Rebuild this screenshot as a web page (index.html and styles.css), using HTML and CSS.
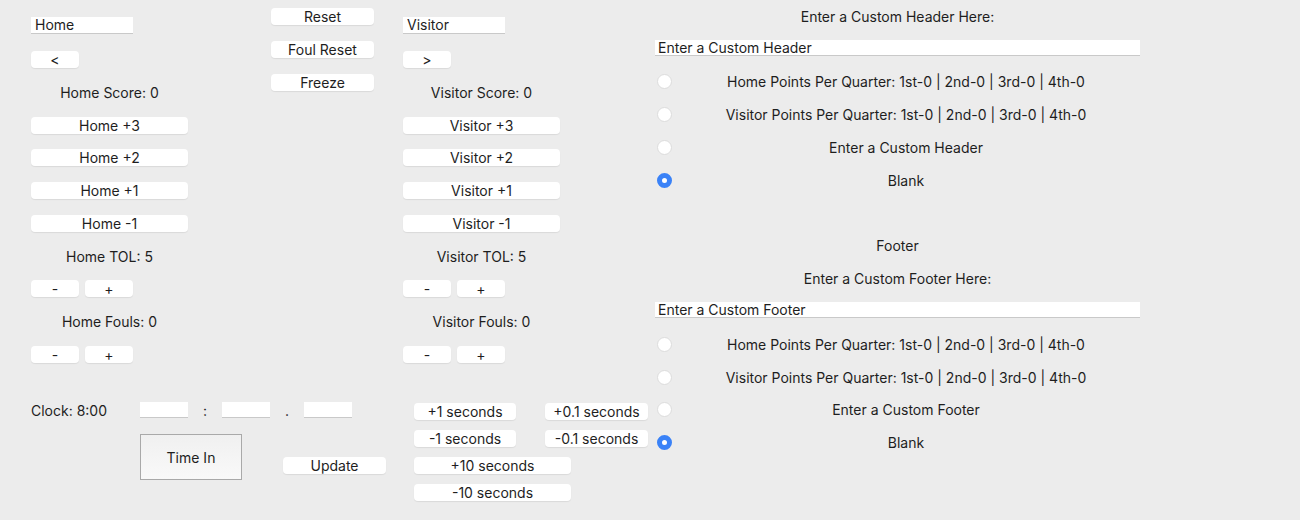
FILE: index.html
```html
<!DOCTYPE html>
<html lang="en">
<head>
<meta charset="UTF-8">
<meta name="viewport" content="width=device-width, initial-scale=1.0">
<title>Scoreboard Controller</title>
<link rel="stylesheet" href="styles.css">
</head>
<body>

<div class="app">
<div class="left">

<!-- Team and game controls -->
<div class="teams">
<div class="team">
<div class="row"><input type="text" class="field name-field" value="Home"></div>
<div class="row"><button class="btn small">&lt;</button></div>
<div class="row label">Home Score: 0</div>
<div class="row"><button class="btn wide">Home +3</button></div>
<div class="row"><button class="btn wide">Home +2</button></div>
<div class="row"><button class="btn wide">Home +1</button></div>
<div class="row"><button class="btn wide">Home -1</button></div>
<div class="row label">Home TOL: 5</div>
<div class="row pair"><button class="btn small">-</button><button class="btn small">+</button></div>
<div class="row label">Home Fouls: 0</div>
<div class="row pair"><button class="btn small">-</button><button class="btn small">+</button></div>
</div>

<div class="controls">
<div class="row"><button class="btn mid">Reset</button></div>
<div class="row"><button class="btn mid">Foul Reset</button></div>
<div class="row"><button class="btn mid">Freeze</button></div>
</div>

<div class="team">
<div class="row"><input type="text" class="field name-field" value="Visitor"></div>
<div class="row"><button class="btn small">&gt;</button></div>
<div class="row label">Visitor Score: 0</div>
<div class="row"><button class="btn wide">Visitor +3</button></div>
<div class="row"><button class="btn wide">Visitor +2</button></div>
<div class="row"><button class="btn wide">Visitor +1</button></div>
<div class="row"><button class="btn wide">Visitor -1</button></div>
<div class="row label">Visitor TOL: 5</div>
<div class="row pair"><button class="btn small">-</button><button class="btn small">+</button></div>
<div class="row label">Visitor Fouls: 0</div>
<div class="row pair"><button class="btn small">-</button><button class="btn small">+</button></div>
</div>
</div>

<!-- Clock -->
<div class="clock">
<div class="clock-set">
<div class="clock-row">
<span class="clock-label">Clock: 8:00</span>
<input type="text" class="field clock-field">
<span class="sep">:</span>
<input type="text" class="field clock-field">
<span class="sep">.</span>
<input type="text" class="field clock-field">
</div>
<div class="clock-actions">
<button class="time-in">Time In</button>
<button class="btn mid update">Update</button>
</div>
</div>

<div class="seconds">
<button class="btn sec">+1 seconds</button>
<button class="btn sec">+0.1 seconds</button>
<button class="btn sec">-1 seconds</button>
<button class="btn sec">-0.1 seconds</button>
<button class="btn sec long">+10 seconds</button>
<button class="btn sec long">-10 seconds</button>
</div>
</div>
</div>

<!-- Header / footer options -->
<div class="right">
<div class="rrow label">Enter a Custom Header Here:</div>
<div class="rrow"><input type="text" class="field text-long" value="Enter a Custom Header"></div>
<div class="rrow option"><span class="radio"></span><span class="opt-text">Home Points Per Quarter: 1st-0 | 2nd-0 | 3rd-0 | 4th-0</span></div>
<div class="rrow option"><span class="radio"></span><span class="opt-text">Visitor Points Per Quarter: 1st-0 | 2nd-0 | 3rd-0 | 4th-0</span></div>
<div class="rrow option"><span class="radio"></span><span class="opt-text">Enter a Custom Header</span></div>
<div class="rrow option"><span class="radio checked"></span><span class="opt-text">Blank</span></div>
<div class="rrow"></div>
<div class="rrow label">Footer</div>
<div class="rrow label">Enter a Custom Footer Here:</div>
<div class="rrow"><input type="text" class="field text-long" value="Enter a Custom Footer"></div>
<div class="rrow option"><span class="radio"></span><span class="opt-text">Home Points Per Quarter: 1st-0 | 2nd-0 | 3rd-0 | 4th-0</span></div>
<div class="rrow option"><span class="radio"></span><span class="opt-text">Visitor Points Per Quarter: 1st-0 | 2nd-0 | 3rd-0 | 4th-0</span></div>
<div class="rrow option"><span class="radio"></span><span class="opt-text">Enter a Custom Footer</span></div>
<div class="rrow option"><span class="radio checked"></span><span class="opt-text">Blank</span></div>
</div>
</div>

</body>
</html>
```

FILE: styles.css
```css
body {
margin: 0;
background-color: #ececec;
font-family: Inter, "Liberation Sans", Arial, sans-serif;
font-size: 14px;
color: #1e1e1e;
}

.app {
display: flex;
height: 520px;
}

.left {
width: 617px;
padding-left: 31px;
}

.teams {
display: flex;
height: 372px;
}

.team {
width: 157px;
padding-top: 9px;
}

.team .row {
height: 32.75px;
}

.team .label {
padding-top: 3px;
box-sizing: border-box;
}

.controls {
width: 103px;
margin: 0 29px 0 83px;
}

.row {
height: 33px;
display: flex;
align-items: center;
}

.label {
justify-content: center;
}

.pair {
gap: 6px;
}

.field {
box-sizing: border-box;
height: 17px;
margin: 0;
padding: 0 4px;
border: none;
border-bottom: 1px solid #c9c9c9;
background-color: white;
font-family: inherit;
font-size: 14px;
color: #1e1e1e;
outline: none;
}

.name-field {
width: 102px;
}

.btn {
box-sizing: border-box;
flex-shrink: 0;
height: 17px;
margin: 0;
padding: 0;
border: none;
border-radius: 4px;
background-color: white;
box-shadow: 0 1px 1px rgba(0, 0, 0, 0.08);
font-family: inherit;
font-size: 14px;
line-height: 17px;
color: #1e1e1e;
cursor: pointer;
}

.team .btn {
margin-top: 3px;
}

.small {
width: 48px;
}

.wide {
width: 157px;
}

.mid {
width: 103px;
}

.clock {
display: flex;
margin-top: 25px;
}

.clock-set {
flex-shrink: 0;
width: 321px;
}

.clock-row {
display: flex;
align-items: center;
height: 27px;
}

.clock-label {
width: 109px;
}

.clock-field {
width: 48px;
height: 16px;
margin-top: -2px;
}

.sep {
width: 34px;
text-align: center;
}

.clock-actions {
display: flex;
align-items: flex-start;
padding-left: 109px;
}

.time-in {
box-sizing: border-box;
flex-shrink: 0;
width: 102px;
height: 46px;
margin-top: 10px;
border: 1px solid #a9a9a9;
background: linear-gradient(#f0f0f0, #f9f9f9);
font-family: inherit;
font-size: 14px;
color: #1e1e1e;
}

.update {
margin: 33px 0 0 41px;
}

.seconds {
display: grid;
grid-template-columns: 102px 103px;
grid-auto-rows: 27px;
column-gap: 29px;
align-items: center;
margin-left: 62px;
}

.sec {
width: 100%;
margin-top: 1px;
}

.sec.long {
grid-column: 1 / -1;
width: 157px;
}

.right {
width: 485px;
margin-left: 7px;
}

.rrow {
height: 32.8px;
display: flex;
align-items: center;
}

.text-long {
width: 485px;
height: 16px;
margin-top: -3px;
padding-left: 3px;
}

.radio {
box-sizing: border-box;
width: 15px;
height: 15px;
margin-left: 2px;
border-radius: 50%;
background-color: white;
border: 1px solid #dcdcdc;
}

.radio.checked {
border: 5px solid #3a82f7;
}

.opt-text {
flex: 1;
text-align: center;
}
```
